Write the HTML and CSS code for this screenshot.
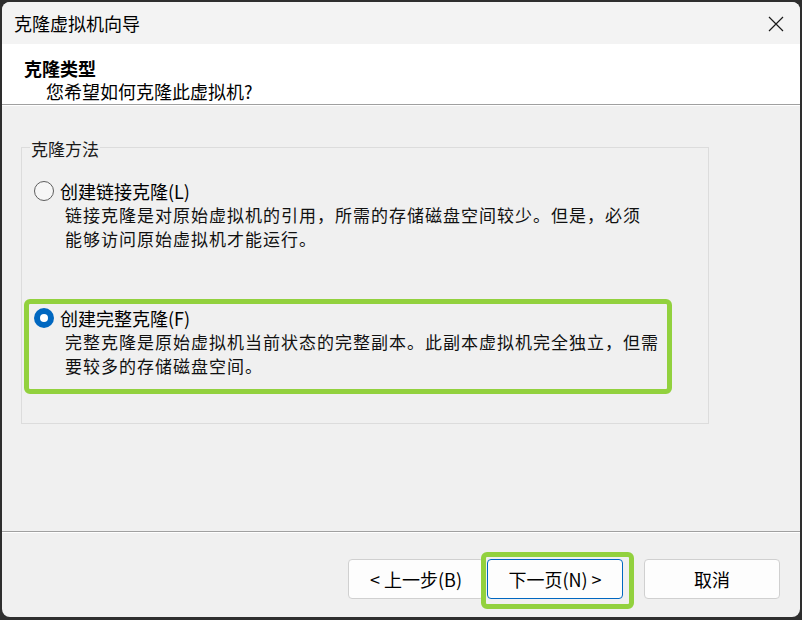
FILE: index.html
```html
<!DOCTYPE html>
<html lang="zh-CN">
<head>
<meta charset="utf-8">
<title>克隆虚拟机向导</title>
<link rel="stylesheet" href="styles.css">
</head>
<body>
<div class="window">
  <div class="titlebar">
    <span class="title">克隆虚拟机向导</span>
    <span class="close">
      <svg width="16" height="16" viewBox="0 0 16 16"><path d="M1 1 L15 15 M15 1 L1 15" stroke="#1a1a1a" stroke-width="1.2" fill="none"/></svg>
    </span>
  </div>
  <div class="header">
    <div class="h-title">克隆类型</div>
    <div class="h-sub">您希望如何克隆此虚拟机?</div>
  </div>
  <div class="main">
    <div class="group">
      <div class="legend">克隆方法</div>
      <div class="option opt-linked">
        <div class="opt-row"><span class="radio"></span><span class="opt-label">创建链接克隆(L)</span></div>
        <div class="opt-desc">
          <div>链接克隆是对原始虚拟机的引用，所需的存储磁盘空间较少。但是，必须</div>
          <div>能够访问原始虚拟机才能运行。</div>
        </div>
      </div>
      <div class="option opt-full mark">
        <div class="opt-row"><span class="radio checked"></span><span class="opt-label">创建完整克隆(F)</span></div>
        <div class="opt-desc">
          <div>完整克隆是原始虚拟机当前状态的完整副本。此副本虚拟机完全独立，但需</div>
          <div>要较多的存储磁盘空间。</div>
        </div>
      </div>
    </div>
  </div>
  <div class="footer">
    <button class="btn">&lt; 上一步(B)</button>
    <button class="btn primary mark-btn">下一页(N) &gt;</button>
    <button class="btn cancel">取消</button>
  </div>
</div>
</body>
</html>
```

FILE: styles.css
```css
*, *::before, *::after { box-sizing: border-box; }
html, body { margin: 0; padding: 0; }
body {
  background: #2e2e2e;
  width: 802px;
  height: 620px;
  overflow: hidden;
  font-family: "Noto Sans CJK SC", "Noto Sans", sans-serif;
  color: #000;
}
.window {
  margin: 2px 0 0 2px;
  width: 798px;
  height: 615px;
  border-radius: 8px;
  background: #f0f0f0;
  overflow: hidden;
  display: flex;
  flex-direction: column;
}
.titlebar {
  height: 42px;
  flex: none;
  background: #f3f3f3;
  display: flex;
  align-items: center;
  justify-content: space-between;
  padding: 0 16px 0 12px;
}
.title { font-size: 18px; line-height: 24px; }
.close { display: flex; width: 16px; height: 16px; margin-top: 1px; }
.header {
  height: 61px;
  flex: none;
  background: #fff;
  border-bottom: 1px solid #a0a0a0;
  padding: 12px 0 0 22px;
}
.h-title { font-size: 18px; font-weight: 700; line-height: 24px; }
.h-sub { font-size: 18px; line-height: 22px; margin-left: 22px; }
.main {
  flex: 1;
  border-top: 1px solid #fff;
}
.group {
  margin: 41px 0 0 19px;
  width: 688px;
  height: 277px;
  border: 1px solid #dcdcdc;
  padding-left: 12px;
}
.legend {
  width: max-content;
  margin: -11px 0 0 -4px;
  padding: 0 1px;
  background: #f0f0f0;
  font-size: 17px;
  line-height: 24px;
  color: #1a1a1a;
}
.option { position: relative; }
.opt-linked { margin-top: 18px; }
.opt-full { margin-top: 55px; }
.opt-row { display: flex; align-items: center; gap: 6px; height: 24px; }
.radio {
  width: 20px;
  height: 20px;
  border-radius: 50%;
  border: 1px solid #5e5e5e;
  background: #f6f6f6;
  flex: none;
  position: relative;
}
.radio.checked {
  border: none;
  background: #0067c0;
}
.radio.checked::after {
  content: "";
  position: absolute;
  left: 6px;
  top: 6px;
  width: 8px;
  height: 8px;
  border-radius: 50%;
  background: #fff;
}
.opt-label { font-size: 18px; line-height: 24px; }
.opt-desc {
  margin-left: 31px;
  font-size: 17px;
  letter-spacing: 1px;
  line-height: 24px;
  color: #111;
}
.mark::after {
  content: "";
  position: absolute;
  left: -10px;
  top: -7px;
  width: 648px;
  height: 95px;
  border: 5px solid #92d13e;
  border-radius: 6px;
  pointer-events: none;
}
.footer {
  height: 86px;
  flex: none;
  border-top: 1px solid #a0a0a0;
  box-shadow: inset 0 1px 0 #fff;
  display: flex;
  justify-content: flex-end;
  align-items: flex-start;
  padding: 27px 20px 0 0;
}
.btn {
  width: 136px;
  height: 40px;
  background: #fdfdfd;
  border: 1px solid #d0d0d0;
  border-radius: 4px;
  font-family: "Noto Sans CJK SC", "Noto Sans", sans-serif;
  font-size: 18px;
  line-height: 24px;
  color: #000;
  padding: 0;
  position: relative;
}
.btn.primary { margin-left: 3px; border-color: #0067c0; }
.btn.cancel { margin-left: 21px; }
.mark-btn::after {
  content: "";
  position: absolute;
  left: -7px;
  top: -8px;
  width: 153px;
  height: 57px;
  border: 5px solid #92d13e;
  border-radius: 6px;
}
```
